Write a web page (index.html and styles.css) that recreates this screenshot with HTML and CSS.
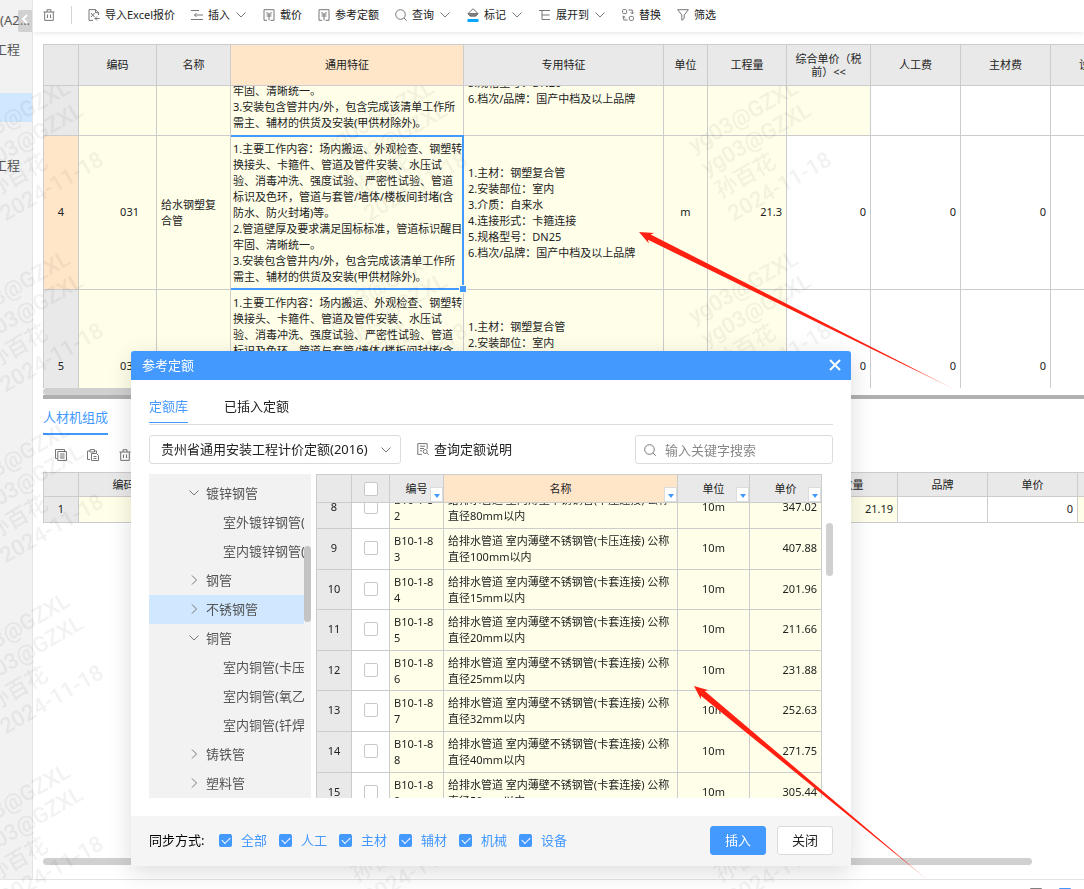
FILE: index.html
```html
<!DOCTYPE html>
<html lang="zh-CN">
<head>
<meta charset="utf-8">
<title>参考定额</title>
<link rel="stylesheet" href="styles.css">
</head>
<body>
<svg class="sprite" aria-hidden="true">
  <symbol id="chev-down" viewBox="0 0 12 12"><path d="M1.5 3.5 6 8l4.500-4.500"/></symbol>
  <symbol id="chev-right" viewBox="0 0 12 12"><path d="M4 1.500 8.500 6 4 10.500"/></symbol>
  <symbol id="trash" viewBox="0 0 12 12"><path d="M.5 3h11M4 3V.7h4V3M1.700 3v8.400h8.600V3M4.500 5.500v3.500M7.500 5.500v3.500"/></symbol>
  <symbol id="search" viewBox="0 0 12 12"><circle cx="5.500" cy="5.500" r="4.800"/><path d="m9 9 2.700 2.700"/></symbol>
  <symbol id="price" viewBox="0 0 12 12"><path d="M1 .7h10v10.600H7.500M1 .7v10.600h3M3.500 3l1.500 1.500M8.500 3 7 4.500M3.500 5h5M3.500 7h5M6 5v6.300"/></symbol>
</svg>

<div class="app">
  <div class="workspace">
    <aside class="sidebar">
      <div class="side-row side-first">(A2...</div>
      <div class="side-row">工程</div>
      <div class="side-row"></div>
      <div class="side-row side-active"></div>
      <div class="side-row"></div>
      <div class="side-row">工程</div>
      <button class="collapse" type="button" aria-label="收起"><svg class="ico" viewBox="0 0 12 12"><path d="M8 2 4 6l4 4"/></svg></button>
    </aside>

    <main class="main">
      <div class="toolbar">
        <button class="tool tool-delete" type="button" aria-label="删除"><svg class="ico"><use href="#trash"/></svg></button>
        <span class="divider"></span>
        <button class="tool" type="button"><svg class="ico" viewBox="0 0 12 12"><path d="M5 11.400H1V.6h6.500l3 3V6M7.500.6v3h3M3 4l3.500 4M6.500 4 3 8M11.700 9.500H7M9 7.500l-2 2 2 2"/></svg>导入Excel报价</button>
        <button class="tool" type="button"><svg class="ico" viewBox="0 0 12 12"><path d="M0 1.500h8M3.500 6H12M0 10.500h12M5.500 4l-2 2 2 2"/></svg>插入<svg class="ico"><use href="#chev-down"/></svg></button>
        <button class="tool" type="button"><svg class="ico"><use href="#price"/></svg>载价</button>
        <button class="tool" type="button"><svg class="ico"><use href="#price"/></svg>参考定额</button>
        <button class="tool" type="button"><svg class="ico"><use href="#search"/></svg>查询<svg class="ico"><use href="#chev-down"/></svg></button>
        <button class="tool" type="button"><svg class="ico ico-mark" viewBox="0 0 12 14"><path d="M1 5.500 6 .8l5 4.700-2 2.500H3z"/><path class="solid" d="M1 5.500h10L9 8H3z"/><path class="accent" d="M.5 11h11v3H.5z"/></svg>标记<svg class="ico"><use href="#chev-down"/></svg></button>
        <button class="tool" type="button"><svg class="ico" viewBox="0 0 12 12"><path d="M0 1.500h11M3 1.500v9M3 6h7.500M3 10.500h8"/></svg>展开到<svg class="ico"><use href="#chev-down"/></svg></button>
        <button class="tool" type="button"><svg class="ico" viewBox="0 0 12 12"><rect x=".6" y=".6" width="4" height="4" rx="1"/><rect x="7.400" y="7.400" width="4" height="4" rx="1"/><path d="M6.500 1h3.800v3.800M8.600 3.300l1.700 1.700L12 3.300M5.500 11H1.700V7.200M0 8.700 1.700 7l1.700 1.700"/></svg>替换</button>
        <button class="tool" type="button"><svg class="ico" viewBox="0 0 12 12"><path d="M.6.7h10.800L7.200 6v3.500L4.800 11.300V6z"/></svg>筛选</button>
      </div>

      <div class="content">
        <div class="grid-scroll" data-scroll="104">
          <table class="grid bill">
            <colgroup><col class="w36"><col class="w78"><col class="w74"><col class="w233"><col class="w200"><col class="w44"><col class="w79"><col class="w84"><col class="w90"><col class="w90"><col class="w90"></colgroup>
            <thead>
              <tr><th></th><th>编码</th><th>名称</th><th class="current">通用特征</th><th>专用特征</th><th>单位</th><th>工程量</th><th class="wrap">综合单价（税前）&lt;&lt;</th><th>人工费</th><th>主材费</th><th>设备费</th></tr>
            </thead>
            <tbody>
              <tr>
                <th></th><td class="y"></td><td class="y"></td>
                <td class="y feature">1.主要工作内容：场内搬运、外观检查、钢塑转<br>换接头、卡箍件、管道及管件安装、水压试<br>验、消毒冲洗、强度试验、严密性试验、管道<br>标识及色环，管道与套管/墙体/楼板间封堵(含<br>防水、防火封堵)等。<br>2.管道壁厚及要求满足国标标准，管道标识醒目<br>牢固、清晰统一。<br>3.安装包含管井内/外，包含完成该清单工作所<br>需主、辅材的供货及安装(甲供材除外)。</td>
                <td class="y">1.主材：钢塑复合管<br>2.安装部位：室内<br>3.介质：自来水<br>4.连接形式：卡箍连接<br>5.规格型号：DN20<br>6.档次/品牌：国产中档及以上品牌</td>
                <td class="y"></td><td class="y"></td><td class="y"></td><td></td><td></td><td></td>
              </tr>
              <tr>
                <th class="current">4</th><td class="y code">031</td><td class="y">给水钢塑复合管</td>
                <td class="y feature selected">1.主要工作内容：场内搬运、外观检查、钢塑转<br>换接头、卡箍件、管道及管件安装、水压试<br>验、消毒冲洗、强度试验、严密性试验、管道<br>标识及色环，管道与套管/墙体/楼板间封堵(含<br>防水、防火封堵)等。<br>2.管道壁厚及要求满足国标标准，管道标识醒目<br>牢固、清晰统一。<br>3.安装包含管井内/外，包含完成该清单工作所<br>需主、辅材的供货及安装(甲供材除外)。</td>
                <td class="y">1.主材：钢塑复合管<br>2.安装部位：室内<br>3.介质：自来水<br>4.连接形式：卡箍连接<br>5.规格型号：DN25<br>6.档次/品牌：国产中档及以上品牌</td>
                <td class="y mid">m</td><td class="y num">21.3</td><td class="num">0</td><td class="num">0</td><td class="num">0</td><td></td>
              </tr>
              <tr>
                <th>5</th><td class="y code">032</td><td class="y"></td>
                <td class="y feature">1.主要工作内容：场内搬运、外观检查、钢塑转<br>换接头、卡箍件、管道及管件安装、水压试<br>验、消毒冲洗、强度试验、严密性试验、管道<br>标识及色环，管道与套管/墙体/楼板间封堵(含<br>防水、防火封堵)等。<br>2.管道壁厚及要求满足国标标准，管道标识醒目<br>牢固、清晰统一。<br>3.安装包含管井内/外，包含完成该清单工作所<br>需主、辅材的供货及安装(甲供材除外)。</td>
                <td class="y">1.主材：钢塑复合管<br>2.安装部位：室内<br>3.介质：自来水<br>4.连接形式：卡箍连接<br>5.规格型号：DN32<br>6.档次/品牌：国产中档及以上品牌</td>
                <td class="y mid"></td><td class="y num"></td><td class="num">0</td><td class="num">0</td><td class="num">0</td><td></td>
              </tr>
            </tbody>
          </table>
        </div>
        <div class="hbar hbar-top"></div>
        <div class="splitter"></div>

        <div class="detail-tabs"><button class="detail-tab" type="button">人材机组成</button></div>
        <div class="detail-tools">
          <button class="tool" type="button" aria-label="复制"><svg class="ico" viewBox="0 0 12 12"><path d="M2.500 9.500H.5V.5h9v1.500M2.800 2.500h8.700v9H2.800zM5 5h4.500M5 7h4.500M5 9h4.500"/></svg></button>
          <button class="tool" type="button" aria-label="粘贴"><svg class="ico" viewBox="0 0 12 12"><path d="M3 10.500H.5V2H3M7.500 2h2v2M3 .6h4.500V3H3zM4.500 4.500h5l2 2v5h-7zM6.500 7.500h3M6.500 9.500h3"/></svg></button>
          <button class="tool" type="button" aria-label="移除"><svg class="ico"><use href="#trash"/></svg></button>
        </div>
        <div class="grid-box">
          <table class="grid parts">
            <colgroup><col class="w36"><col class="w90"><col class="w99"><col class="w90" span="10"></colgroup>
            <thead><tr><th></th><th>编码</th><th></th><th></th><th></th><th></th><th></th><th></th><th></th><th>数量</th><th>品牌</th><th>单价</th><th></th></tr></thead>
            <tbody><tr><th>1</th><td class="y"></td><td class="y"></td><td class="y"></td><td class="y"></td><td class="y"></td><td class="y"></td><td class="y"></td><td class="y"></td><td class="y num">21.19</td><td></td><td class="num">0</td><td class="y"></td></tr></tbody>
          </table>
        </div>
        <div class="hbar hbar-bottom"></div>
      </div>
    </main>
  </div>
  <footer class="statusbar"><svg class="status-icon" viewBox="0 0 12 12"><path d="M.5.5h11v11H.5z"/></svg><svg class="status-icon status-on" viewBox="0 0 12 12"><path d="M.5.5h11v11H.5z"/></svg></footer>
</div>

<svg class="watermark" aria-hidden="true">
  <defs>
    <pattern id="wm" patternUnits="userSpaceOnUse" x="-64" y="-6" width="364" height="171">
      <g transform="translate(30 73) rotate(-30)"><text y="0">yg03@GZXL</text><text y="26">yg03@GZXL</text><text y="53">孙百花</text><text y="79">2024-11-18</text></g>
    </pattern>
  </defs>
  <rect width="100%" height="100%" fill="url(#wm)"/>
</svg>

<section class="dialog" role="dialog" aria-labelledby="dlg-title">
  <header class="dialog-head">
    <span id="dlg-title">参考定额</span>
    <button class="dialog-close" type="button" aria-label="关闭窗口"><svg class="ico" viewBox="0 0 12 12"><path d="m1 1 10 10M11 1 1 11"/></svg></button>
  </header>
  <div class="dialog-body">
    <nav class="tabs"><button class="tab tab-on" type="button">定额库</button><button class="tab" type="button">已插入定额</button></nav>
    <div class="filters">
      <div class="select-box">
        <select aria-label="定额库"><option>贵州省通用安装工程计价定额(2016)</option></select>
        <svg class="ico"><use href="#chev-down"/></svg>
      </div>
      <button class="explain" type="button"><svg class="ico" viewBox="0 0 12 12"><path d="M5 11.400H.8V.6h9.400V6M3 3.200h5M3 5.500h4M3 7.800h2"/><circle cx="8.200" cy="8.500" r="2"/><path d="m9.700 10 2 1.700"/></svg>查询定额说明</button>
      <label class="search-box"><svg class="ico"><use href="#search"/></svg><input type="text" placeholder="输入关键字搜索" aria-label="搜索"></label>
    </div>
    <div class="panes">
      <div class="tree">
        <ul class="tree-list">
          <li class="node"><svg class="ico"><use href="#chev-down"/></svg>镀锌钢管</li>
          <li class="node leaf">室外镀锌钢管(螺纹连接)</li>
          <li class="node leaf">室内镀锌钢管(螺纹连接)</li>
          <li class="node"><svg class="ico"><use href="#chev-right"/></svg>钢管</li>
          <li class="node node-on"><svg class="ico"><use href="#chev-right"/></svg>不锈钢管</li>
          <li class="node"><svg class="ico"><use href="#chev-down"/></svg>铜管</li>
          <li class="node leaf">室内铜管(卡压连接)</li>
          <li class="node leaf">室内铜管(氧乙炔焊)</li>
          <li class="node leaf">室内铜管(钎焊)</li>
          <li class="node"><svg class="ico"><use href="#chev-right"/></svg>铸铁管</li>
          <li class="node"><svg class="ico"><use href="#chev-right"/></svg>塑料管</li>
        </ul>
        <div class="vbar vbar-tree"></div>
      </div>
      <div class="grid-scroll quota-scroll" data-scroll="15">
        <table class="grid quota">
          <colgroup><col class="w36"><col class="w38"><col class="w54"><col><col class="w72"><col class="w72"></colgroup>
          <thead>
            <tr><th></th><th><input type="checkbox" aria-label="全选"></th><th>编号<button class="sort" type="button" aria-label="筛选编号"></button></th><th class="current">名称<button class="sort" type="button" aria-label="筛选名称"></button></th><th>单位<button class="sort" type="button" aria-label="筛选单位"></button></th><th>单价<button class="sort" type="button" aria-label="筛选单价"></button></th></tr>
          </thead>
          <tbody>
            <tr><th>8</th><td class="mid"><input type="checkbox" aria-label="8"></td><td class="y">B10-1-8<br>2</td><td class="y">给排水管道 室内薄壁不锈钢管(卡压连接) 公称<br>直径80mm以内</td><td class="y mid">10m</td><td class="y num">347.02</td></tr>
            <tr><th>9</th><td class="mid"><input type="checkbox" aria-label="9"></td><td class="y">B10-1-8<br>3</td><td class="y">给排水管道 室内薄壁不锈钢管(卡压连接) 公称<br>直径100mm以内</td><td class="y mid">10m</td><td class="y num">407.88</td></tr>
            <tr class="tight"><th>10</th><td class="mid"><input type="checkbox" aria-label="10"></td><td class="y">B10-1-8<br>4</td><td class="y">给排水管道 室内薄壁不锈钢管(卡套连接) 公称<br>直径15mm以内</td><td class="y mid">10m</td><td class="y num">201.96</td></tr>
            <tr><th>11</th><td class="mid"><input type="checkbox" aria-label="11"></td><td class="y">B10-1-8<br>5</td><td class="y">给排水管道 室内薄壁不锈钢管(卡套连接) 公称<br>直径20mm以内</td><td class="y mid">10m</td><td class="y num">211.66</td></tr>
            <tr class="tight"><th>12</th><td class="mid"><input type="checkbox" aria-label="12"></td><td class="y">B10-1-8<br>6</td><td class="y">给排水管道 室内薄壁不锈钢管(卡套连接) 公称<br>直径25mm以内</td><td class="y mid">10m</td><td class="y num">231.88</td></tr>
            <tr><th>13</th><td class="mid"><input type="checkbox" aria-label="13"></td><td class="y">B10-1-8<br>7</td><td class="y">给排水管道 室内薄壁不锈钢管(卡套连接) 公称<br>直径32mm以内</td><td class="y mid">10m</td><td class="y num">252.63</td></tr>
            <tr><th>14</th><td class="mid"><input type="checkbox" aria-label="14"></td><td class="y">B10-1-8<br>8</td><td class="y">给排水管道 室内薄壁不锈钢管(卡套连接) 公称<br>直径40mm以内</td><td class="y mid">10m</td><td class="y num">271.75</td></tr>
            <tr><th>15</th><td class="mid"><input type="checkbox" aria-label="15"></td><td class="y">B10-1-8<br>9</td><td class="y">给排水管道 室内薄壁不锈钢管(卡套连接) 公称<br>直径50mm以内</td><td class="y mid">10m</td><td class="y num">305.44</td></tr>
          </tbody>
        </table>
      </div>
      <div class="vbar vbar-quota"></div>
    </div>
  </div>
  <footer class="dialog-foot">
    <span class="sync-title">同步方式:</span>
    <label class="sync"><input type="checkbox" checked>全部</label>
    <label class="sync"><input type="checkbox" checked>人工</label>
    <label class="sync"><input type="checkbox" checked>主材</label>
    <label class="sync"><input type="checkbox" checked>辅材</label>
    <label class="sync"><input type="checkbox" checked>机械</label>
    <label class="sync"><input type="checkbox" checked>设备</label>
    <button class="btn btn-primary" type="button">插入</button>
    <button class="btn" type="button">关闭</button>
  </footer>
</section>

<svg class="arrows" aria-hidden="true">
  <defs>
    <linearGradient id="fade"><stop offset="0.850" stop-color="#ff2012"/><stop offset="1" stop-color="#ff2012" stop-opacity="0.300"/></linearGradient>
  </defs>
  <path fill="url(#fade)" transform="translate(639 232) rotate(26.500)" d="M0 0 14-6 11.500-3 354 0 11.500 3 14 6z"/>
  <path fill="url(#fade)" transform="translate(694 686) rotate(39.700)" d="M0 0 14-6 11.500-3 304 0 11.500 3 14 6z"/>
</svg>
<script src="app.js"></script>
</body>
</html>
```

FILE: styles.css
```css
* { box-sizing: border-box; }

:root {
  --blue: #4499ff;
  --line: #cccccc;
  --head: #e9e9e9;
  --yellow: #ffffe9;
  --orange: #ffe6c9;
}

body {
  margin: 0;
  font-family: "Noto Sans", "Noto Sans CJK SC", sans-serif;
  font-size: 11px;
  line-height: 16px;
  color: #222;
  background: #fff;
  overflow: hidden;
}

button, input, select { font: inherit; color: inherit; }
button { padding: 0; border: 0; background: none; white-space: nowrap; }

.sprite { display: none; }
.ico {
  flex: none;
  width: 12px;
  height: 12px;
  fill: none;
  stroke: #777;
  stroke-width: 1;
}
.ico-mark { height: 14px; }
.ico .solid { fill: #808080; }
.ico .accent { fill: #00a6ff; stroke: none; }

.app { display: flex; flex-direction: column; height: 100vh; isolation: isolate; }
.workspace { flex: 1; display: flex; min-height: 0; }

.sidebar {
  position: relative;
  flex: 0 0 33px;
  padding-top: 6px;
  background: #f2f2f2;
  border-right: 1px solid #e3e3e3;
  overflow: hidden;
}
.side-row {
  display: flex;
  align-items: center;
  justify-content: flex-end;
  height: 29px;
  padding: 0 12px 2px 0;
  font-size: 13px;
  color: #555;
  white-space: nowrap;
}
.side-first { justify-content: flex-start; }
.side-active { background: #cfe7ff; }
.collapse {
  position: absolute;
  top: 10px;
  right: 0;
  width: 14px;
  height: 22px;
  background: rgba(160, 160, 160, 0.400);
  border-radius: 2px 0 0 2px;
}
.collapse .ico { stroke: #fff; stroke-width: 2; }

.main { flex: 1; min-width: 0; display: flex; flex-direction: column; }
.toolbar {
  display: flex;
  align-items: center;
  gap: 16px;
  height: 32px;
  padding: 0 10px 2px;
  box-shadow: 0 1px 5px rgba(0, 0, 0, 0.100);
}
.tool { display: flex; align-items: center; gap: 5px; }
.divider { width: 1px; height: 18px; background: #d5d5d5; }

.content {
  flex: 1;
  min-height: 0;
  display: flex;
  flex-direction: column;
  padding: 12px 0 14px 10px;
}

.grid-scroll { flex: none; height: 344px; overflow: hidden; }
.grid-box { overflow: hidden; }
.grid {
  table-layout: fixed;
  width: 100%;
  border-spacing: 0;
  border-collapse: separate;
}
.bill { width: 1098px; }
.parts { width: 1125px; }
.grid th, .grid td {
  padding: 0 4px;
  border-right: 1px solid var(--line);
  border-bottom: 1px solid var(--line);
  font-weight: 400;
}
.grid td { background: #fff; text-align: left; }
.grid th { background: var(--head); text-align: center; }
.grid th:first-child { border-left: 1px solid var(--line); }
.grid thead th { position: sticky; top: 0; z-index: 2; border-top: 1px solid var(--line); }
.grid tbody th { padding-bottom: 2px; }
.grid th.current { background: var(--orange); }
.grid td.y { background: var(--yellow); }
.grid td.num { text-align: right; padding: 0 4px 2px; }
.grid td.mid { text-align: center; padding-bottom: 2px; }
.grid td.code { text-align: right; padding: 0 17px 2px 0; }
.grid th.wrap { padding: 0 6px; line-height: 13px; }
.bill thead tr { height: 42px; }
.bill tbody tr { height: 154px; }
.grid td.feature { padding: 0 0 0 2px; white-space: nowrap; }
.parts thead tr { height: 25px; }
.parts tbody tr { height: 26px; }

.selected { position: relative; }
.selected::before {
  content: "";
  position: absolute;
  inset: -1px -1px -1px 0;
  border: solid var(--blue);
  border-width: 2px 2px 2px 0;
}
.selected::after {
  content: "";
  position: absolute;
  right: -4px;
  bottom: -4px;
  z-index: 1;
  width: 6px;
  height: 6px;
  background: var(--blue);
  border: 1px solid var(--yellow);
  box-sizing: content-box;
}

.w36 { width: 36px; }
.w38 { width: 38px; }
.w44 { width: 44px; }
.w54 { width: 54px; }
.w72 { width: 72px; }
.w74 { width: 74px; }
.w78 { width: 78px; }
.w79 { width: 79px; }
.w84 { width: 84px; }
.w90 { width: 90px; }
.w99 { width: 99px; }
.w200 { width: 200px; }
.w233 { width: 233px; }

.hbar { flex: none; height: 7px; border-radius: 4px; background: #d0d0d0; }
.hbar-top { width: 60%; }
.hbar-bottom { width: 95%; margin-top: auto; }
.splitter { flex: none; height: 4px; background: #b0b0b0; }

.detail-tabs { display: flex; flex: none; height: 36px; }
.detail-tab { padding-top: 2px; font-size: 13px; color: var(--blue); border-bottom: 2px solid var(--blue); }
.detail-tools {
  display: flex;
  flex: none;
  align-items: center;
  gap: 20px;
  height: 37px;
  padding: 2px 0 0 12px;
}

.statusbar {
  display: flex;
  gap: 17px;
  justify-content: flex-end;
  height: 10px;
  padding: 8px 13px 0 0;
  border-top: 1px solid #e3e3e3;
  overflow: hidden;
}
.status-icon { flex: none; width: 12px; height: 12px; fill: none; stroke: #808080; }
.status-on { stroke: var(--blue); }

.watermark {
  position: absolute;
  top: 86px;
  left: 0;
  width: 96%;
  height: calc(100% - 86px);
  pointer-events: none;
}
.watermark text {
  font-family: Roboto, "Noto Sans CJK SC", sans-serif;
  font-size: 22px;
  font-weight: 500;
  fill: rgba(0, 0, 0, 0.050);
}

.dialog {
  position: absolute;
  top: 351px;
  left: 131px;
  width: 720px;
  background: #fff;
  border-radius: 3px 3px 0 0;
  box-shadow: 0 6px 24px rgba(0, 0, 0, 0.140);
  font-size: 13px;
}
.dialog-head {
  display: flex;
  align-items: center;
  justify-content: space-between;
  height: 29px;
  padding: 0 10px 2px 11px;
  color: #fff;
  background: var(--blue);
  border-radius: 3px 3px 0 0;
}
.dialog-close { display: flex; }
.dialog-close .ico { stroke: #fff; stroke-width: 2; }
.dialog-body { padding: 0 18px 18px; }

.tabs { display: flex; gap: 36px; height: 45px; padding-top: 10px; border-bottom: 1px solid #dcdcdc; }
.tab { height: 33px; border-bottom: 1px solid transparent; }
.tab-on { color: var(--blue); border-color: var(--blue); }

.filters { display: flex; align-items: center; gap: 16px; padding: 10px 0; }
.select-box {
  display: flex;
  align-items: center;
  width: 252px;
  height: 29px;
  padding-right: 8px;
  border: 1px solid #dcdcdc;
  border-radius: 3px;
}
.select-box select {
  flex: 1;
  min-width: 0;
  height: 27px;
  padding: 0 0 2px 11px;
  border: 0;
  appearance: none;
  background: none;
}
.explain { display: flex; align-items: center; gap: 5px; padding-bottom: 2px; }
.search-box {
  display: flex;
  align-items: center;
  gap: 9px;
  width: 198px;
  height: 29px;
  margin-left: auto;
  padding: 0 8px;
  border: 1px solid #dcdcdc;
  border-radius: 3px;
}
.search-box input { flex: 1; min-width: 0; padding: 0; border: 0; outline: 0; background: none; }
.search-box input::placeholder { color: #888; opacity: 1; }

.panes { display: flex; height: 324px; }
.tree { display: flex; flex: 0 0 162px; margin-right: 5px; background: #f2f2f2; overflow: hidden; }
.tree-list { flex: 1; min-width: 0; margin: 0; padding: 5px 0 0; list-style: none; overflow: hidden; color: #555; }
.node {
  display: flex;
  align-items: center;
  gap: 6px;
  height: 29px;
  padding: 0 0 2px 39px;
  white-space: nowrap;
}
.leaf { padding-left: 74px; }
.node-on { background: #cfe7ff; }

.vbar { flex: none; width: 7px; border-radius: 4px; background: #c4c4c4; }
.vbar-tree { height: 76px; margin-top: 72px; }
.vbar-quota { height: 53px; margin: 49px 0 0 4px; background: #d0d0d0; }

.quota-scroll { flex: 1; height: 324px; font-size: 11px; }
.quota thead tr { height: 29px; }
.quota tbody tr { height: 41px; }
.quota tbody tr.tight { height: 40px; }
.sort {
  position: absolute;
  right: 0;
  bottom: 0;
  width: 13px;
  height: 15px;
  background: #fff;
  border: 1px solid #dcdcdc;
}
.sort::before {
  content: "";
  display: block;
  width: 0;
  margin: 2px auto 0;
  border: 3px solid transparent;
  border-top: 4px solid var(--blue);
  border-bottom: 0;
}

input[type="checkbox"] {
  appearance: none;
  display: block;
  width: 14px;
  height: 14px;
  margin: 0 auto;
  border: 1px solid #c8c8c8;
  border-radius: 2px;
  background: #fff;
}

.dialog-foot { display: flex; align-items: center; height: 50px; padding: 0 18px 2px; background: #f5f5f5; }
.sync-title { flex: 0 0 70px; color: #000; }
.sync { display: flex; align-items: center; gap: 9px; margin-right: 12px; color: var(--blue); }
.sync input[type="checkbox"] {
  display: grid;
  place-items: center;
  width: 13px;
  height: 13px;
  margin: 0;
  border: 0;
  background: var(--blue);
}
.sync input::before {
  content: "";
  width: 7px;
  height: 4px;
  margin-bottom: 2px;
  border: solid #fff;
  border-width: 0 0 1px 1px;
  transform: rotate(-45deg);
}
.btn {
  width: 56px;
  height: 29px;
  margin-left: 11px;
  border: 1px solid #dcdcdc;
  border-radius: 3px;
  background: #fff;
}
.btn-primary { margin-left: auto; color: #fff; background: var(--blue); border-color: var(--blue); }

.arrows { position: absolute; top: 0; left: 0; width: 100%; height: 100%; pointer-events: none; }
```

FILE: app.js
```js
document.querySelectorAll('[data-scroll]').forEach(function (el) {
  el.scrollTop = Number(el.dataset.scroll);
});
```
